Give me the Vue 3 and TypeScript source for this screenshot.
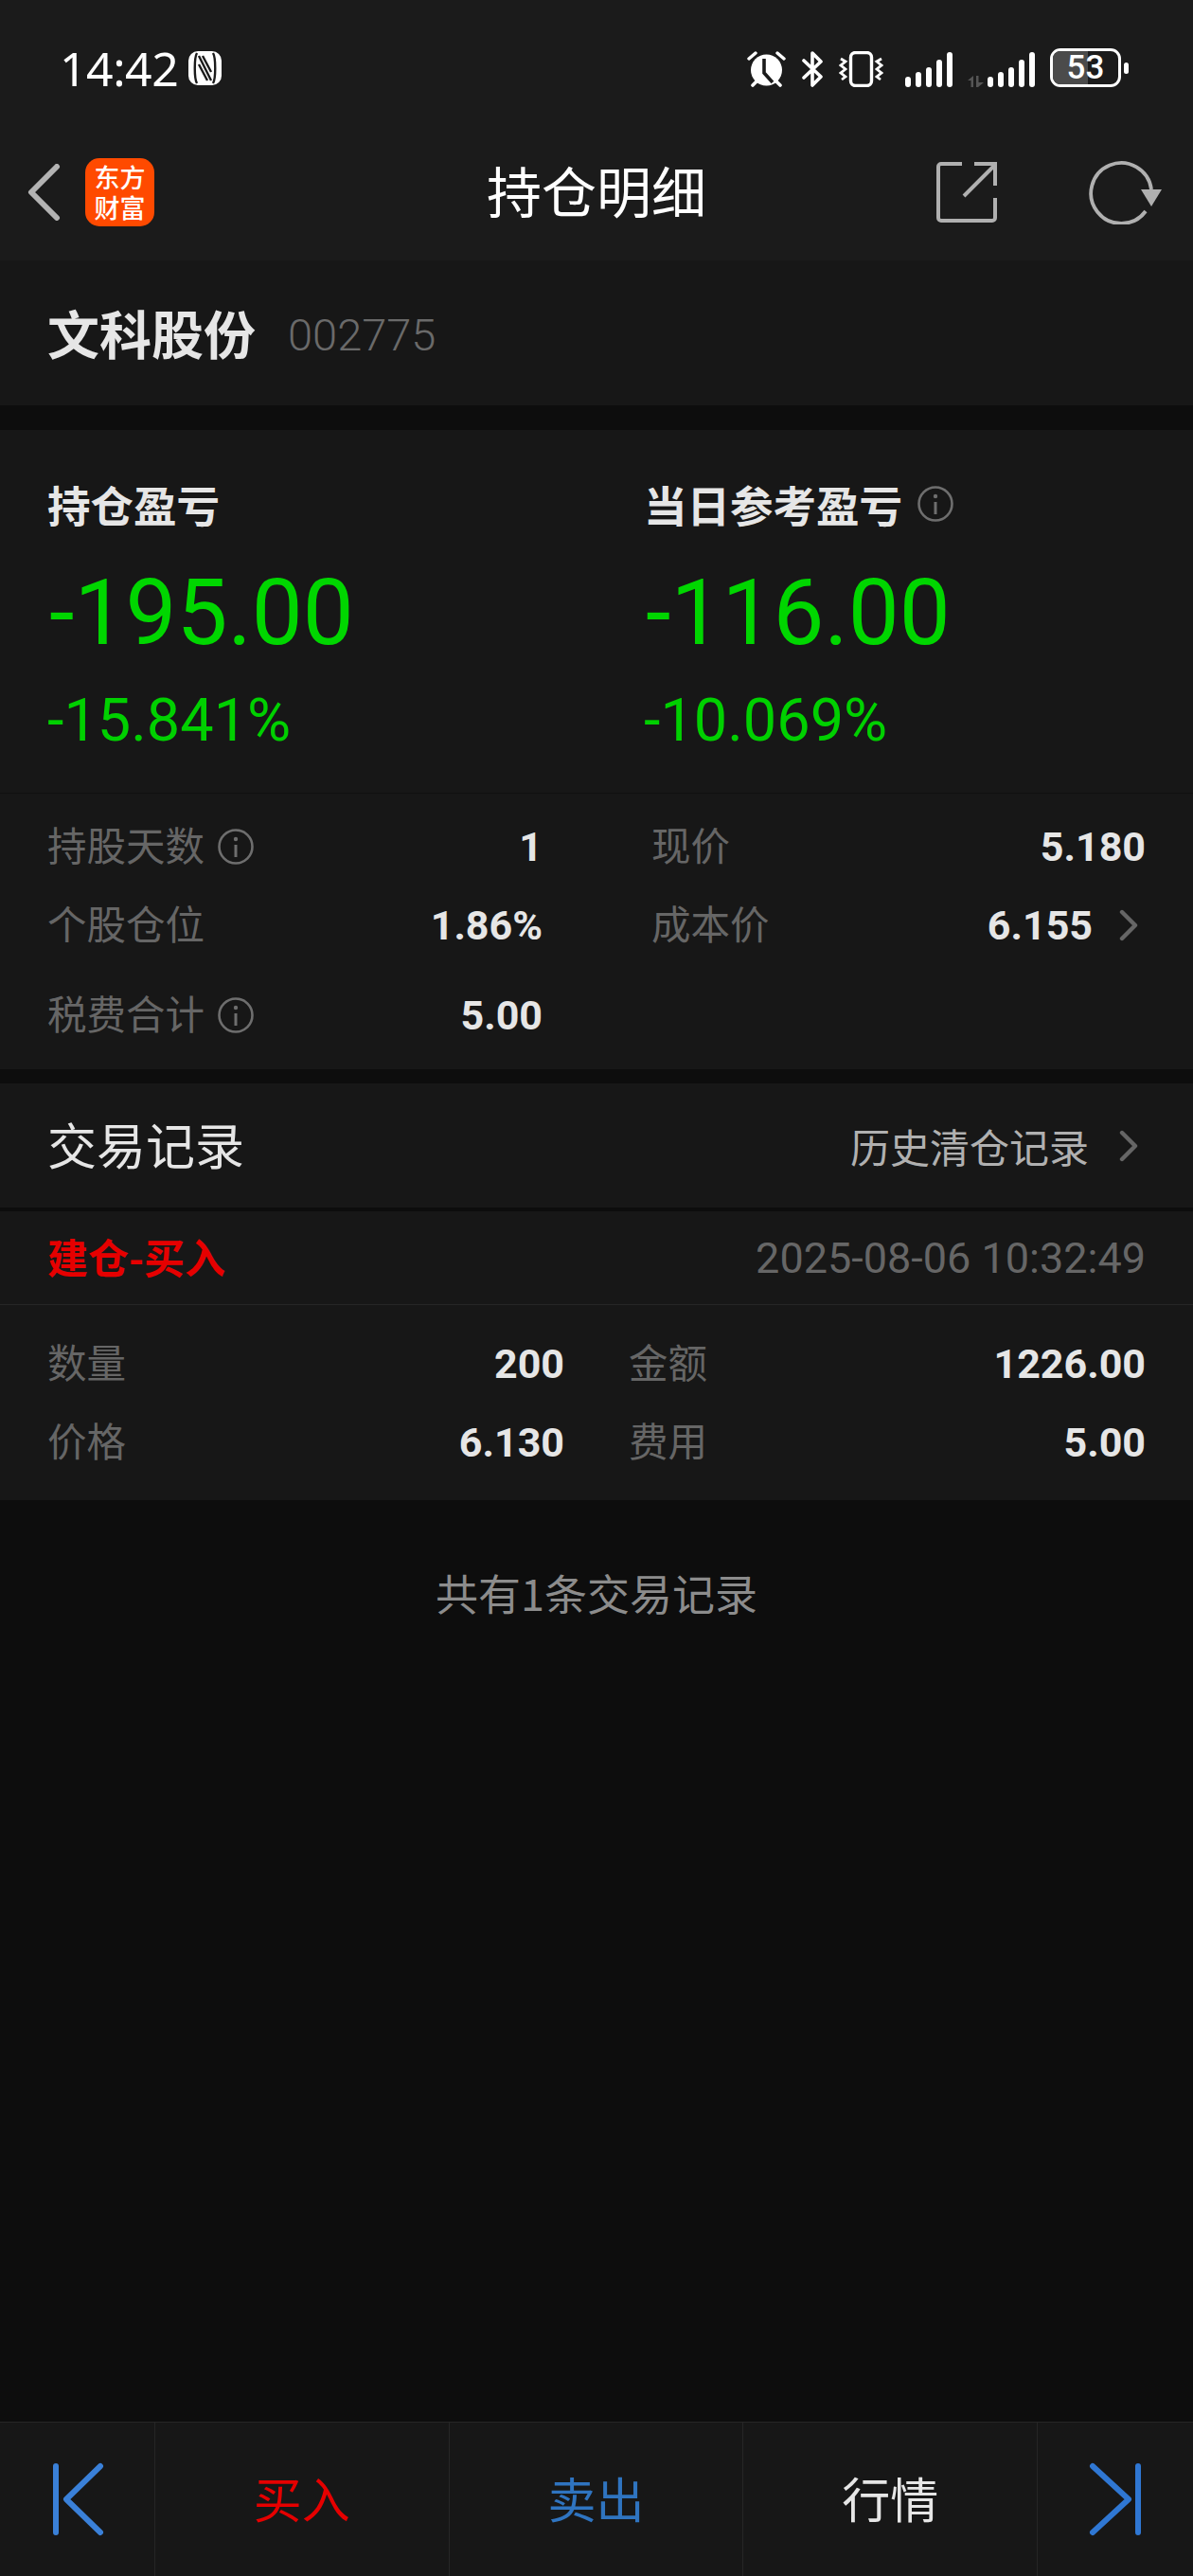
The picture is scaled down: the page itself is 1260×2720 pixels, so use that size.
<script setup lang="ts">
interface Stat { label: string; value: string; info?: boolean; chevron?: boolean }
const statsLeft: Stat[] = [
  { label: '持股天数', value: '1', info: true },
  { label: '个股仓位', value: '1.86%' },
  { label: '税费合计', value: '5.00', info: true },
]
const statsRight: Stat[] = [
  { label: '现价', value: '5.180' },
  { label: '成本价', value: '6.155', chevron: true },
]
const bars = [11, 16, 21, 29, 37]
</script>

<template>
  <div class="page">
    <header class="top">
      <div class="status">
        <div class="status-left">
          <span class="time">14:42</span>
          <svg class="nfc" width="35" height="36" viewBox="0 0 35 36">
            <rect x="0" y="0" width="35" height="36" rx="10" fill="#fff" />
            <path d="M9 2c-3 5-3 27 0 32M26 2c3 5 3 27 0 32" stroke="#1b1b1b" stroke-width="2.4" fill="none" />
            <path d="M11 5l13 26M11 14l9 17M24 22L15 5" stroke="#1b1b1b" stroke-width="2.4" fill="none" />
          </svg>
        </div>
        <div class="status-right">
          <svg width="41" height="38" viewBox="0 0 41 38">
            <path d="M2 8l7-6M39 8l-7-6" stroke="#fff" stroke-width="3.4" stroke-linecap="round" />
            <path d="M6 36l5-5M35 36l-5-5" stroke="#fff" stroke-width="3.6" stroke-linecap="round" />
            <circle cx="20.500" cy="20" r="16.500" fill="#fff" />
            <path d="M18 8v15l9 10" stroke="#1b1b1b" stroke-width="3.600" fill="none" />
          </svg>
          <svg class="bt" width="24" height="38" viewBox="0 0 24 38">
            <path d="M3 10l18 17-9 9V2l9 9L3 28" stroke="#fff" stroke-width="3.600" fill="none" stroke-linejoin="round" stroke-linecap="round" />
          </svg>
          <svg class="vib" width="47" height="38" viewBox="0 0 47 38">
            <rect x="12.500" y="1.500" width="22" height="35" rx="5" stroke="#fff" stroke-width="3.400" fill="none" />
            <path d="M2 8l5 3-5 4 5 4-5 4 5 4-4 3M45 8l-5 3 5 4-5 4 5 4-5 4 4 3" stroke="#fff" stroke-width="2.800" fill="none" />
          </svg>
          <span class="bars first">
            <i v-for="h in bars" :key="h" :style="{ height: h + 'px' }"></i>
          </span>
          <span class="sim2">
            <svg width="17" height="12" viewBox="0 0 17 12">
              <path d="M6 0v12H3.500V5H0zM9 0h2.500v7H17l-6 5H9z" fill="#555" />
            </svg>
            <span class="bars">
              <i v-for="h in bars" :key="h" :style="{ height: h + 'px' }"></i>
            </span>
          </span>
          <span class="battery">
            <span class="shell"><span class="fill"></span><span class="pct">53</span></span>
            <span class="nub"></span>
          </span>
        </div>
      </div>
      <nav class="nav">
        <div class="nav-left">
          <svg width="35" height="60" viewBox="0 0 35 60">
            <path d="M31 3L4 30l27 27" stroke="#b3b3b3" stroke-width="6" fill="none" stroke-linecap="round" stroke-linejoin="round" />
          </svg>
          <div class="logo"><span class="logo-text">东方财富</span></div>
        </div>
        <h1 class="title">持仓明细</h1>
        <div class="nav-right">
          <svg width="64" height="64" viewBox="0 0 64 64">
            <path d="M27 2H5a3 3 0 0 0-3 3v54a3 3 0 0 0 3 3h54a3 3 0 0 0 3-3V38" stroke="#b0b0b0" stroke-width="4" fill="none" />
            <path d="M29 36L61 4M40 2h22v23" stroke="#b0b0b0" stroke-width="4" fill="none" />
          </svg>
          <svg width="77" height="68" viewBox="0 0 77 68">
            <path d="M60 54A32 32 0 1 1 66 31" stroke="#b0b0b0" stroke-width="3.800" fill="none" />
            <path d="M55 31h22l-11 18z" fill="#b0b0b0" />
          </svg>
        </div>
      </nav>
    </header>

    <section class="stock">
      <span class="stock-name">文科股份</span>
      <span class="stock-code">002775</span>
    </section>

    <section class="card pnl-card">
      <div class="pnl">
        <div class="pnl-col">
          <div class="pnl-label">持仓盈亏</div>
          <div class="pnl-big">-195.00</div>
          <div class="pnl-pct">-15.841%</div>
        </div>
        <div class="pnl-col right">
          <div class="pnl-label">当日参考盈亏
            <svg class="info" width="38" height="38" viewBox="0 0 38 38">
              <circle cx="19" cy="19" r="17.500" stroke="#6e6e6e" stroke-width="2.600" fill="none" />
              <circle cx="19" cy="11" r="2.200" fill="#6e6e6e" />
              <path d="M19 17v13" stroke="#6e6e6e" stroke-width="3" />
            </svg>
          </div>
          <div class="pnl-big">-116.00</div>
          <div class="pnl-pct">-10.069%</div>
        </div>
      </div>
      <div class="stats">
        <div class="stats-col left">
          <div v-for="s in statsLeft" :key="s.label" class="stat">
            <span class="stat-label">{{ s.label }}
              <svg v-if="s.info" class="info" width="38" height="38" viewBox="0 0 38 38">
                <circle cx="19" cy="19" r="17.500" stroke="#6e6e6e" stroke-width="2.600" fill="none" />
                <circle cx="19" cy="11" r="2.200" fill="#6e6e6e" />
                <path d="M19 17v13" stroke="#6e6e6e" stroke-width="3" />
              </svg>
            </span>
            <span class="stat-value">{{ s.value }}</span>
          </div>
        </div>
        <div class="stats-col rightc">
          <div v-for="s in statsRight" :key="s.label" class="stat">
            <span class="stat-label">{{ s.label }}</span>
            <span class="stat-value">{{ s.value }}
              <svg v-if="s.chevron" class="chev" width="20" height="34" viewBox="0 0 20 34">
                <path d="M3 3l14 14L3 31" stroke="#666" stroke-width="4.400" fill="none" stroke-linecap="round" stroke-linejoin="round" />
              </svg>
            </span>
          </div>
        </div>
      </div>
    </section>

    <section class="card rec-head">
      <span class="rec-title">交易记录</span>
      <span class="rec-link">历史清仓记录
        <svg width="20" height="34" viewBox="0 0 20 34">
          <path d="M3 3l14 14L3 31" stroke="#666" stroke-width="4.400" fill="none" stroke-linecap="round" stroke-linejoin="round" />
        </svg>
      </span>
    </section>

    <section class="card record">
      <div class="record-top">
        <span class="tag">建仓-买入</span>
        <span class="date">2025-08-06 10:32:49</span>
      </div>
      <div class="record-body">
        <div class="record-col c1">
          <div class="rrow"><span class="stat-label">数量</span><span class="stat-value">200</span></div>
          <div class="rrow"><span class="stat-label">价格</span><span class="stat-value">6.130</span></div>
        </div>
        <div class="record-col c2">
          <div class="rrow"><span class="stat-label">金额</span><span class="stat-value">1226.00</span></div>
          <div class="rrow"><span class="stat-label">费用</span><span class="stat-value">5.00</span></div>
        </div>
      </div>
    </section>

    <p class="count">共有1条交易记录</p>

    <footer class="bottom">
      <div class="cell edge">
        <svg width="56" height="78" viewBox="0 0 56 78">
          <path d="M5 4v70M52 4L16 39l36 35" stroke="#3a80d8" stroke-width="6" fill="none" stroke-linecap="round" stroke-linejoin="round" />
        </svg>
      </div>
      <div class="cell act buy">买入</div>
      <div class="cell act sell">卖出</div>
      <div class="cell act quote">行情</div>
      <div class="cell edge last">
        <svg width="56" height="78" viewBox="0 0 56 78">
          <path d="M52 4v70M4 4l38 35L4 74" stroke="#2f77d3" stroke-width="6" fill="none" stroke-linecap="round" stroke-linejoin="round" />
        </svg>
      </div>
    </footer>
  </div>
</template>

<style>
html, body { margin: 0; background: #0d0d0d; }
</style>

<style scoped>
.page {
  width: 1260px;
  height: 2720px;
  display: flex;
  flex-direction: column;
  background: #0d0d0d;
  font-family: Roboto, "Noto Sans CJK SC", sans-serif;
  color: #e6e6e6;
  overflow: hidden;
}
.top { height: 275px; background: #1b1b1b; display: flex; flex-direction: column; }
.status {
  height: 140px;
  padding: 51px 68px 0 63px;
  box-sizing: border-box;
  display: flex;
  justify-content: space-between;
  align-items: flex-start;
}
.status-left { display: flex; align-items: center; gap: 11px; height: 41px; }
.time { font-size: 50px; color: #fff; line-height: 40px; font-family: "Noto Sans", Roboto, sans-serif; letter-spacing: -0.5px; }
.nfc { display: block; }
.status-right { display: flex; align-items: flex-end; height: 41px; }
.status-right svg { display: block; }
.bt { margin-left: 16px; }
.vib { margin-left: 16px; }
.bars { display: flex; align-items: flex-end; gap: 5px; height: 37px; }
.bars i { display: block; width: 6px; background: #fff; border-radius: 3px; }
.bars.first { margin-left: 23px; }
.sim2 { display: flex; align-items: flex-end; margin-left: 16px; }
.sim2 svg { margin-right: 4px; }
.battery { display: flex; align-items: center; margin-left: 16px; height: 41px; }
.shell {
  position: relative;
  box-sizing: border-box;
  width: 75px;
  height: 41px;
  border: 3px solid #fff;
  border-radius: 11px;
  display: flex;
  align-items: center;
  justify-content: center;
  overflow: hidden;
}
.fill { position: absolute; left: 0; top: 0; bottom: 0; width: 53%; background: #4b4b4b; }
.pct { position: relative; font-size: 35px; color: #fff; line-height: 1; font-weight: 500; }
.nub { width: 5px; height: 12px; background: #fff; border-radius: 2.500px; margin-left: 3px; }
.nav { position: relative; flex: 1; display: flex; align-items: center; justify-content: space-between; padding: 0 33px 9px 29px; }
.nav-left { display: flex; align-items: center; gap: 26px; }
.nav-left svg { display: block; }
.logo {
  width: 73px; height: 72px; border-radius: 15px; background: #ff4a00; color: #fff;
  display: flex; align-items: center; justify-content: center;
}
.logo-text {
  display: block; width: 56px; text-align: center;
  font-size: 27px; line-height: 32px; font-weight: 500;
  font-family: "Noto Sans CJK SC", sans-serif;
}
.title {
  position: absolute; left: 0; right: 0; top: 50%; margin: -42px 0 0; text-align: center;
  font-size: 58px; font-weight: 400; line-height: 68px; color: #fff;
  font-family: "Noto Sans CJK SC", sans-serif;
}
.nav-right { display: flex; align-items: center; gap: 97px; }
.nav-right svg { display: block; }
.stock {
  height: 153px; background: #171717; box-sizing: border-box; padding: 4px 50px 0;
  display: flex; align-items: center; gap: 34px;
}
.stock-name { font-size: 55px; font-weight: 700; color: #e6e6e6; font-family: "Noto Sans CJK SC", sans-serif; line-height: 1; margin-top: -6px; }
.stock-code { font-size: 47px; color: #6a6a6a; font-weight: 300; line-height: 1; }
.card { background: #171717; }
.pnl-card { margin-top: 26px; height: 675px; display: flex; flex-direction: column; }
.pnl { height: 384px; box-sizing: border-box; border-bottom: 1px solid #101010; display: flex; padding: 0 50px; }
.pnl-col { width: 630px; padding-top: 48px; }
.pnl-col.right { width: auto; }
.pnl-label {
  font-size: 45.500px; font-weight: 700; line-height: 60px; color: #e6e6e6; display: flex; align-items: center; gap: 16px;
  font-family: "Noto Sans CJK SC", sans-serif;
}
.pnl-big { font-size: 96px; line-height: 100px; color: #00d600; margin: 35px 0 0 2px; font-weight: 400; }
.pnl-pct { font-size: 63px; line-height: 70px; color: #00d000; margin-top: 29px; font-weight: 400; }
.stats { display: flex; flex: 1; padding: 0 50px; }
.stats-col { display: flex; flex-direction: column; padding-top: 26px; }
.stats-col.left { width: 523px; }
.stats-col.rightc { margin-left: 115px; width: 522px; }
.stat { display: flex; justify-content: space-between; align-items: center; height: 60px; margin-bottom: 23px; }
.stat:nth-child(2) { margin-bottom: 35px; }
.stat-label { font-size: 41.500px; color: #666; display: flex; align-items: center; gap: 14px; font-family: "Noto Sans CJK SC", sans-serif; line-height: 1; padding-bottom: 4px; }
.stat-label .info { margin-top: 4px; }
.stat-value { font-size: 43px; font-weight: 700; color: #e6e6e6; display: flex; align-items: center; gap: 28px; line-height: 1; }
.stat .chev { margin-right: 8px; }
.info { display: block; }
.rec-head {
  margin-top: 15px; height: 131px; padding: 0 58px 0 50px; display: flex; align-items: center; justify-content: space-between;
  font-family: "Noto Sans CJK SC", sans-serif;
}
.rec-title { font-size: 52px; color: #e6e6e6; line-height: 1; margin-top: -3px; }
.rec-link { font-size: 42px; color: #b0b0b0; display: flex; align-items: center; gap: 32px; line-height: 1; }
.record { margin-top: 4px; height: 305px; display: flex; flex-direction: column; }
.record-top {
  height: 99px; box-sizing: border-box; border-bottom: 1px solid #262626; padding: 0 50px;
  display: flex; align-items: center; justify-content: space-between;
}
.tag { font-size: 43px; font-weight: 700; color: #e60000; font-family: "Noto Sans CJK SC", sans-serif; line-height: 1; margin-top: -3px; }
.date { font-size: 45px; color: #666; line-height: 1; }
.record-body { display: flex; padding: 32px 50px 0; }
.record-col { display: flex; flex-direction: column; gap: 23px; }
.c1 { width: 546px; }
.c2 { width: 546px; margin-left: 68px; }
.rrow { display: flex; justify-content: space-between; align-items: center; height: 60px; }
.count {
  margin: 68px 0 0; text-align: center; font-size: 45px; line-height: 60px; color: #8c8c8c;
  font-family: "Noto Sans CJK SC", sans-serif;
}
.bottom {
  margin-top: auto; height: 163px; box-sizing: border-box; border-top: 1px solid #262626; background: #171717; display: flex;
}
.cell { display: flex; align-items: center; justify-content: center; box-sizing: border-box; border-right: 1px solid #262626; }
.cell svg { display: block; }
.edge { width: 164px; }
.edge.last { width: 164px; border-right: 0; }
.act { flex: 1; font-size: 51px; padding-bottom: 4px; font-family: "Noto Sans CJK SC", sans-serif; }
.buy { color: #e60000; }
.sell { color: #2f74c0; }
.quote { color: #e6e6e6; }
</style>
